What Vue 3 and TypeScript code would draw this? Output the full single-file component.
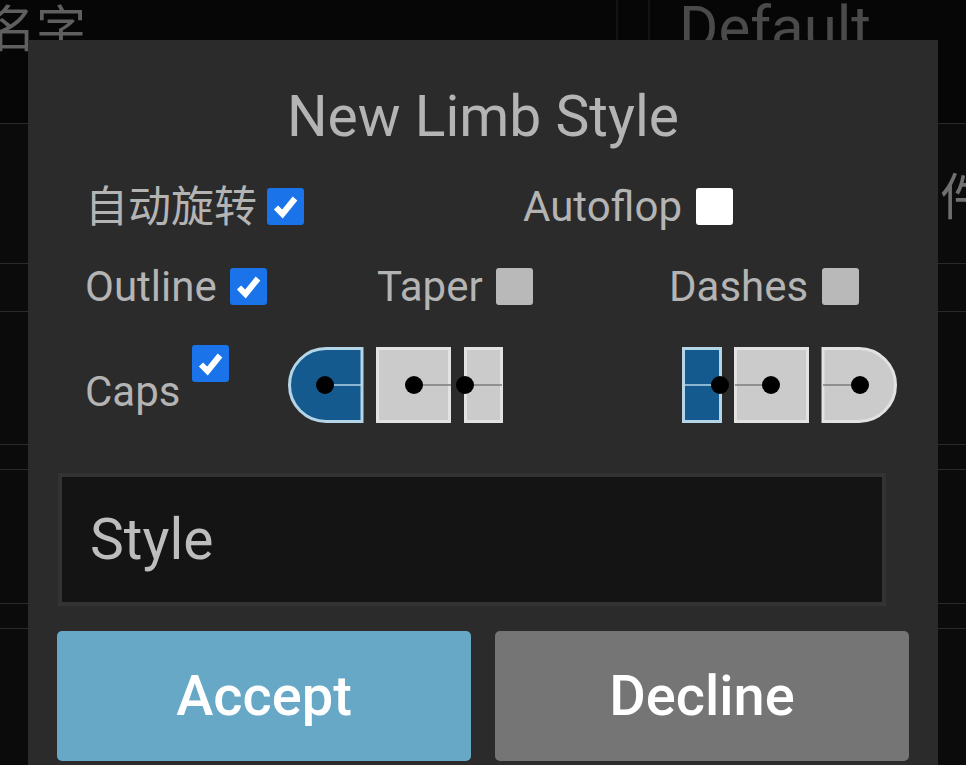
<script setup lang="ts">
type CapKind = 'roundLeft' | 'squareStart' | 'halfLeft' | 'halfRight' | 'squareEnd' | 'roundRight'

interface Cap {
  kind: CapKind
  active: boolean
}

const startCaps: Cap[] = [
  { kind: 'roundLeft', active: true },
  { kind: 'squareStart', active: false },
  { kind: 'halfLeft', active: false },
]

const endCaps: Cap[] = [
  { kind: 'halfRight', active: true },
  { kind: 'squareEnd', active: false },
  { kind: 'roundRight', active: false },
]

const capShape: Record<CapKind, { w: number; d: string; cx: number; line: [number, number] }> = {
  roundLeft: { w: 75, d: 'M74 1.5H38A36.5 36.5 0 0 0 38 74.5H74Z', cx: 37, line: [37, 74] },
  squareStart: { w: 75, d: 'M1.5 1.5H73.5V74.5H1.5Z', cx: 38, line: [38, 75] },
  halfLeft: { w: 39, d: 'M1.5 1.5H37.5V74.5H1.5Z', cx: 1, line: [1, 38] },
  halfRight: { w: 40, d: 'M1.5 1.5H38.5V74.5H1.5Z', cx: 38, line: [38, 1] },
  squareEnd: { w: 76, d: 'M1.5 1.5H73.5V74.5H1.5Z', cx: 37, line: [37, 1] },
  roundRight: { w: 75, d: 'M1 1.5H37A36.5 36.5 0 0 1 37 74.5H1Z', cx: 38, line: [38, 1] },
}
</script>

<template>
  <div class="page">
    <div class="backdrop">
      <div class="back-row back-head">
        <span class="back-name">名字</span>
        <span class="back-divider"></span>
        <span class="back-default">Default</span>
      </div>
      <div class="back-row back-tall"><span class="back-side">件</span></div>
      <div class="back-row back-mid"></div>
      <div class="back-row back-tall2"></div>
      <div class="back-row back-thin"></div>
      <div class="back-row back-tall3"></div>
      <div class="back-row back-thin"></div>
    </div>

    <section class="dialog" role="dialog" aria-label="New Limb Style">
      <h2 class="title">New Limb Style</h2>

      <div class="row row-two">
        <label class="opt gap-cjk">
          <span class="cjk">自动旋转</span>
          <span class="box checked">
            <svg viewBox="0 0 37 37"><path d="M9 19.5l6.5 6.5L28 10.5" /></svg>
          </span>
        </label>
        <label class="opt gap-wide">
          <span>Autoflop</span>
          <span class="box white"></span>
        </label>
      </div>

      <div class="row row-three">
        <label class="opt">
          <span>Outline</span>
          <span class="box checked">
            <svg viewBox="0 0 37 37"><path d="M9 19.5l6.5 6.5L28 10.5" /></svg>
          </span>
        </label>
        <label class="opt">
          <span>Taper</span>
          <span class="box off"></span>
        </label>
        <label class="opt gap-wide">
          <span>Dashes</span>
          <span class="box off"></span>
        </label>
      </div>

      <div class="row caps-row">
        <div class="caps-label">
          <span class="caps-text">Caps</span>
          <span class="box checked caps-box">
            <svg viewBox="0 0 37 37"><path d="M9 19.5l6.5 6.5L28 10.5" /></svg>
          </span>
        </div>
        <div class="cap-group">
          <svg
            v-for="cap in startCaps"
            :key="cap.kind"
            class="cap"
            :class="{ active: cap.active }"
            :width="capShape[cap.kind].w"
            height="76"
            :viewBox="`0 0 ${capShape[cap.kind].w} 76`"
          >
            <path class="cap-body" :d="capShape[cap.kind].d" />
            <line class="cap-line" :x1="capShape[cap.kind].line[0]" y1="38" :x2="capShape[cap.kind].line[1]" y2="38" />
            <circle class="cap-dot" :cx="capShape[cap.kind].cx" cy="38" r="9" />
          </svg>
        </div>
        <div class="cap-group end">
          <svg
            v-for="cap in endCaps"
            :key="cap.kind"
            class="cap"
            :class="{ active: cap.active }"
            :width="capShape[cap.kind].w"
            height="76"
            :viewBox="`0 0 ${capShape[cap.kind].w} 76`"
          >
            <path class="cap-body" :d="capShape[cap.kind].d" />
            <line class="cap-line" :x1="capShape[cap.kind].line[0]" y1="38" :x2="capShape[cap.kind].line[1]" y2="38" />
            <circle class="cap-dot" :cx="capShape[cap.kind].cx" cy="38" r="9" />
          </svg>
        </div>
      </div>

      <input class="name-input" type="text" value="Style" />

      <div class="actions">
        <button type="button" class="accept">Accept</button>
        <button type="button" class="decline">Decline</button>
      </div>
    </section>
  </div>
</template>

<style>
html,
body {
  margin: 0;
  background: #000;
}
</style>

<style scoped>
.page {
  position: relative;
  width: 966px;
  height: 765px;
  overflow: hidden;
  background: #0b0b0b;
  font-family: Roboto, "Noto Sans CJK SC", sans-serif;
}

.backdrop {
  display: flex;
  flex-direction: column;
  color: #5f5f5f;
}

.back-row {
  box-sizing: border-box;
  border-bottom: 1px solid #2a2a2a;
}

.back-head {
  height: 124px;
  background: #060606;
  position: relative;
}

.back-name {
  position: absolute;
  left: -14px;
  top: 0;
  font-size: 50px;
  line-height: 60px;
}

.back-divider {
  position: absolute;
  left: 616px;
  top: 0;
  width: 30px;
  height: 40px;
  border-left: 2px solid #131313;
  border-right: 2px solid #131313;
}

.back-default {
  position: absolute;
  left: 679px;
  top: -7px;
  font-size: 60px;
  line-height: 70px;
  color: #4a4a4a;
}

.back-tall {
  height: 140px;
  position: relative;
}

.back-side {
  position: absolute;
  left: 940px;
  top: 44px;
  font-size: 50px;
  line-height: 60px;
  color: #707070;
}

.back-mid {
  height: 48px;
}

.back-tall2 {
  height: 133px;
}

.back-thin {
  height: 25px;
}

.back-tall3 {
  height: 134px;
}

.dialog {
  position: absolute;
  left: 28px;
  top: 40px;
  width: 910px;
  height: 740px;
  box-sizing: border-box;
  padding: 44px 29px 0;
  background: #2b2b2b;
  color: #b4b4b4;
}

.title {
  margin: 0 0 32px;
  font-size: 57px;
  font-weight: 400;
  line-height: 66px;
  text-align: center;
}

.row {
  margin-left: 28px;
  width: 876px;
  font-size: 42px;
  line-height: 48px;
}

.row-two {
  display: grid;
  grid-template-columns: 438px 438px;
  height: 80px;
}

.row-three {
  display: grid;
  grid-template-columns: 292px 292px 292px;
  height: 77px;
}

.opt {
  display: flex;
  align-items: center;
  gap: 13px;
  height: 48px;
}

.opt > span:first-child {
  padding-top: 2px;
}

.gap-cjk {
  gap: 10px;
}

.gap-wide {
  gap: 14px;
}

.cjk {
  font-size: 43px;
}

.box {
  flex: none;
  display: block;
  width: 37px;
  height: 37px;
  border-radius: 3px;
  box-sizing: border-box;
}

.box svg {
  display: block;
  width: 37px;
  height: 37px;
}

.box path {
  fill: none;
  stroke: #fff;
  stroke-width: 6;
}

.checked {
  background: #1a73e8;
}

.white {
  background: #fff;
}

.off {
  background: #b9b9b9;
}

.caps-row {
  display: flex;
  align-items: flex-start;
  height: 134px;
}

.caps-label {
  flex: none;
  width: 203px;
  display: flex;
  align-items: flex-start;
  gap: 12px;
}

.caps-text {
  margin-top: 29px;
}

.caps-box {
  margin-top: 6px;
}

.cap-group {
  flex: none;
  display: flex;
  gap: 13px;
  margin-top: 8px;
}

.cap-group.end {
  margin-left: 179px;
  gap: 12px;
}

.cap {
  display: block;
  overflow: visible;
}

.cap-body {
  fill: #cbcbcb;
  stroke: #e2e2e2;
  stroke-width: 3;
}

.cap-line {
  stroke: #7d7d7d;
  stroke-width: 1.5;
}

.cap-dot {
  fill: #000;
}

.cap.active .cap-body {
  fill: #155a8f;
  stroke: #b4d4e8;
}

.cap.active .cap-line {
  stroke: #b4d4e8;
}

.name-input {
  display: block;
  box-sizing: border-box;
  width: 828px;
  height: 133px;
  margin: 0 0 25px 1px;
  padding: 0 25px 0 28px;
  background: #141414;
  border: 4px solid #333;
  color: #bdbdbd;
  font-family: inherit;
  font-size: 57px;
  outline: none;
}

.actions {
  display: flex;
  gap: 24px;
}

.actions button {
  width: 414px;
  height: 130px;
  border: none;
  border-radius: 5px;
  color: #fff;
  font-family: inherit;
  font-size: 56px;
  font-weight: 500;
}

.accept {
  background: #67a8c6;
}

.decline {
  background: #757575;
}
</style>
